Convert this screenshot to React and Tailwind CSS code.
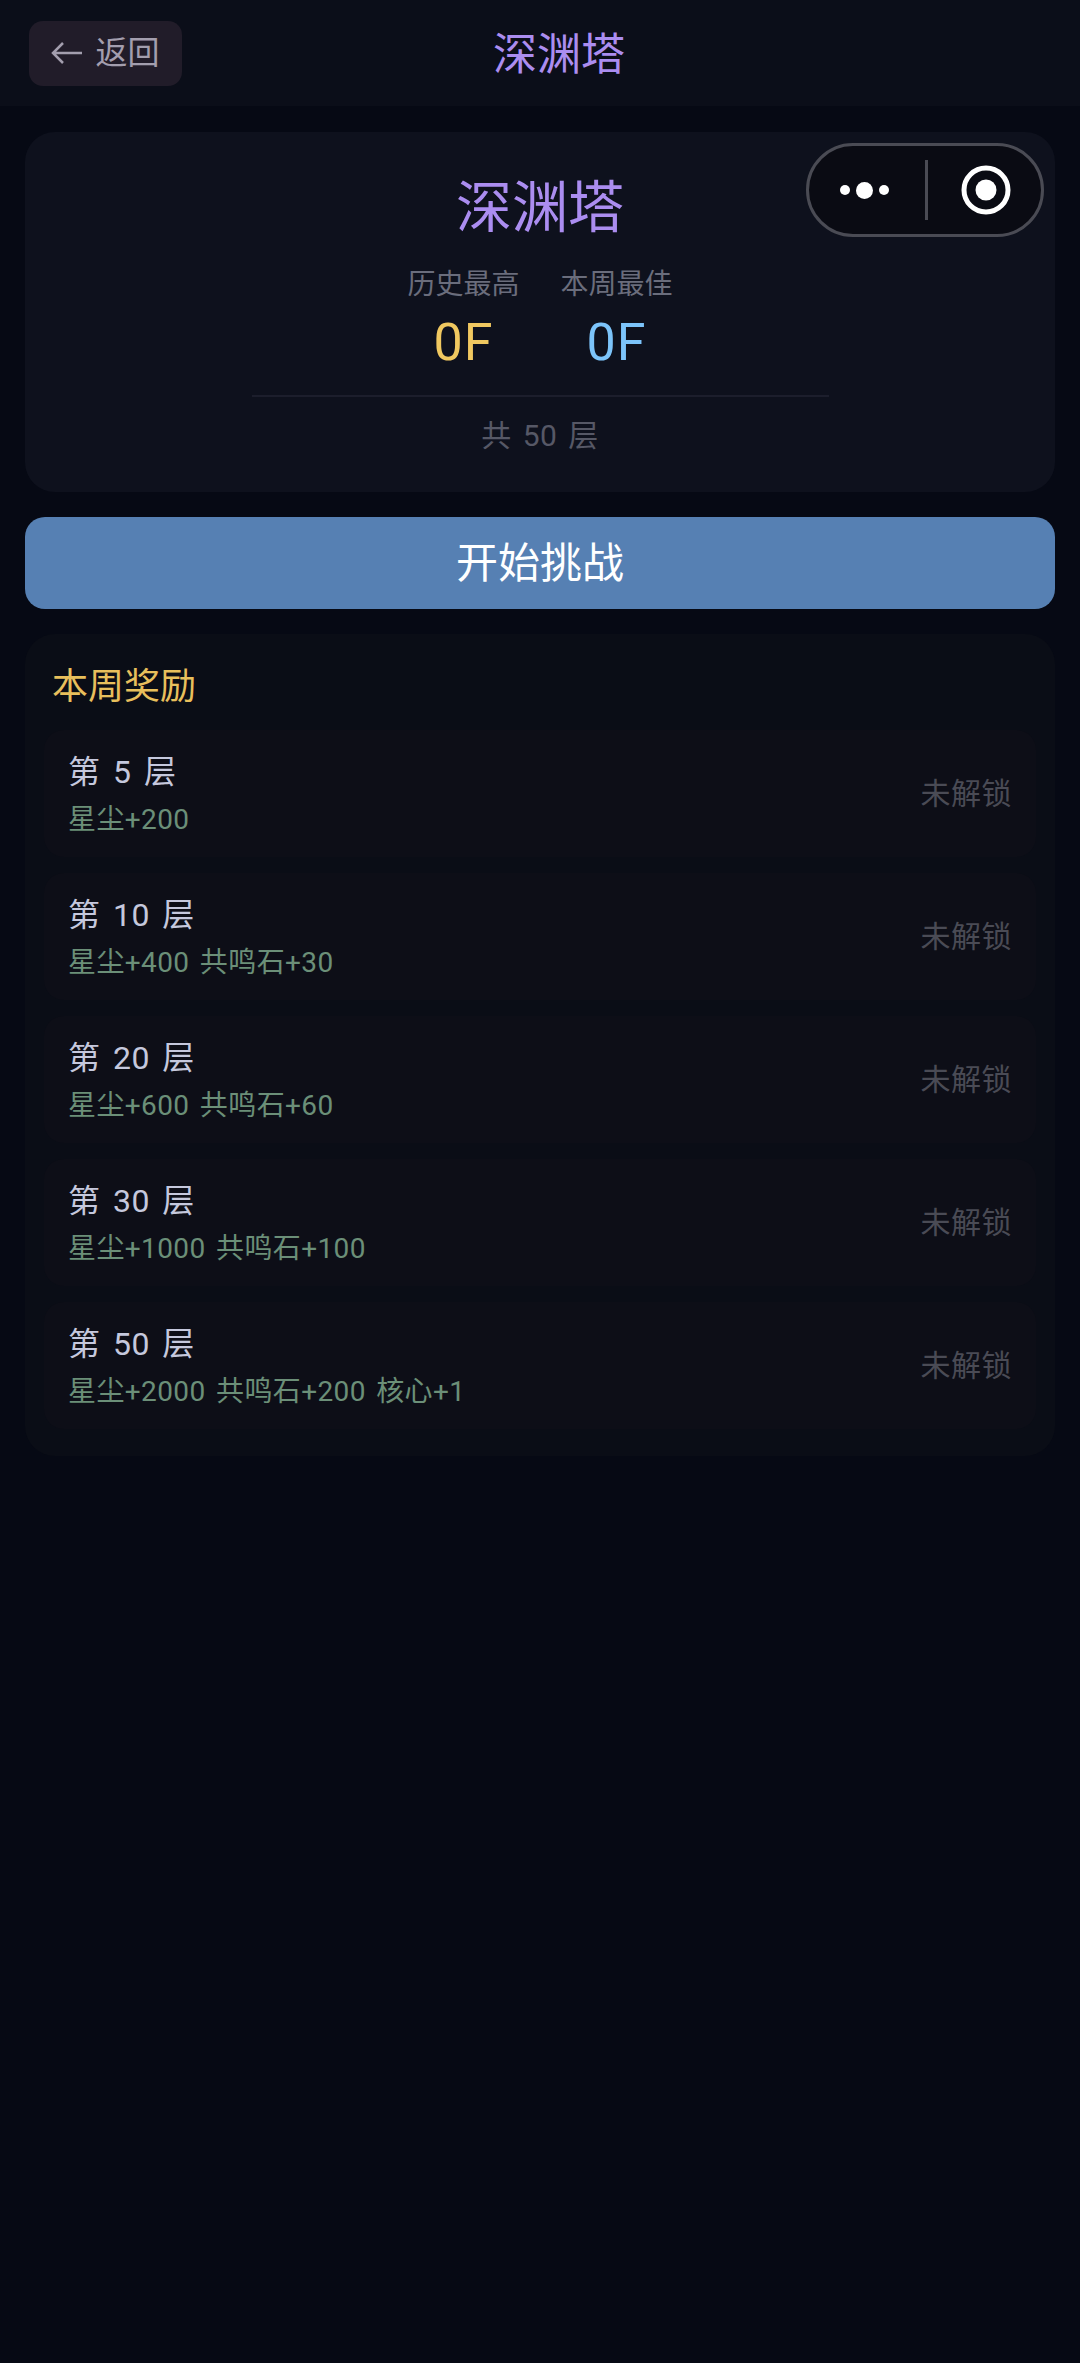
import React from 'react';

const rewards = [
  { floor: 5, text: '星尘+200' },
  { floor: 10, text: '星尘+400 共鸣石+30' },
  { floor: 20, text: '星尘+600 共鸣石+60' },
  { floor: 30, text: '星尘+1000 共鸣石+100' },
  { floor: 50, text: '星尘+2000 共鸣石+200 核心+1' },
];

const font = { fontFamily: 'Roboto, "Noto Sans CJK SC", sans-serif' };

function Capsule() {
  return (
    <div className="absolute left-[806px] top-[143px] flex h-[94px] w-[238px] items-center rounded-full border-[3px] border-[#4a4b54] bg-[#0a0b13]">
      <div className="flex w-[116px] items-center justify-center gap-[6px] pr-[6px]">
        <span className="h-[10px] w-[10px] rounded-full bg-white" />
        <span className="h-[17px] w-[17px] rounded-full bg-white" />
        <span className="h-[10px] w-[10px] rounded-full bg-white" />
      </div>
      <div className="h-[60px] w-[3px] bg-[#4a4b54]" />
      <div className="flex flex-1 items-center justify-center pl-[3px]">
        <svg width="50" height="50" viewBox="0 0 50 50">
          <circle cx="25" cy="25" r="22" fill="none" stroke="#fff" strokeWidth="5" />
          <circle cx="25" cy="25" r="10.5" fill="#fff" />
        </svg>
      </div>
    </div>
  );
}

function RewardRow({ floor, text }) {
  return (
    <div className="flex h-[127px] items-center justify-between rounded-[20px] bg-[#0d0e17] px-[24px]">
      <div>
        <p className="text-[32px] leading-[44px] tracking-[0.5px] [word-spacing:4px] text-[#c5c8dd]">第 {floor} 层</p>
        <p className="mt-[8px] text-[28px] leading-[36px] tracking-[0.4px] [word-spacing:3px] text-[#6b8f78]">{text}</p>
      </div>
      <span className="text-[30px] tracking-[0.5px] text-[#4a4b55]">未解锁</span>
    </div>
  );
}

export default function App() {
  return (
    <div className="relative min-h-[2363px] bg-[#060914]" style={font}>
      <header className="flex h-[106px] items-center bg-[#0b0e19] pl-[29px] pr-[144px]">
        <button className="flex h-[65px] w-[153px] items-center justify-center gap-[12px] rounded-[14px] bg-[#211c29] text-[32px] text-[#a39eae]">
          <svg width="32" height="24" viewBox="0 0 32 24" fill="none" stroke="#a39eae" strokeWidth="2.5">
            <path d="M31 12H2M12 2 2 12l10 10" />
          </svg>
          返回
        </button>
        <h1 className="flex-1 pt-[4px] text-center text-[44px] font-normal text-[#ab8df0]">深渊塔</h1>
      </header>

      <main className="flex flex-col gap-[25px] px-[25px] pt-[26px]">
        <section className="flex h-[360px] flex-col items-center rounded-[30px] bg-[#0e111d] pt-[38px]">
          <h2 className="text-[56px] leading-[76px] font-normal text-[#ab8df0]">深渊塔</h2>
          <div className="mt-[20px] flex gap-[43px]">
            <div className="flex w-[110px] flex-col items-center">
              <span className="text-[28px] leading-[38px] whitespace-nowrap text-[#6a6d7c]">历史最高</span>
              <span className="mt-[8px] text-[52px] leading-[62px] tracking-[1px] text-[#f0c860]">0F</span>
            </div>
            <div className="flex w-[110px] flex-col items-center">
              <span className="text-[28px] leading-[38px] whitespace-nowrap text-[#6a6d7c]">本周最佳</span>
              <span className="mt-[8px] text-[52px] leading-[62px] tracking-[1px] text-[#7cc4fa]">0F</span>
            </div>
          </div>
          <div className="mt-[21px] h-[2px] w-[577px] bg-[#1c1e2c]" />
          <p className="mt-[19px] text-[30px] leading-[40px] tracking-[0.5px] [word-spacing:3px] text-[#565866]">共 50 层</p>
        </section>

        <button className="h-[92px] rounded-[20px] bg-[#5680b3] text-[42px] text-white">开始挑战</button>

        <section className="rounded-[30px] bg-[#0a0d16] px-[19px] pt-[29px] pb-[27px]">
          <h3 className="pl-[8px] text-[36px] leading-[48px] font-normal text-[#e8bf5c]">本周奖励</h3>
          <div className="mt-[19px] flex flex-col gap-[16px]">
            {rewards.map(r => <RewardRow key={r.floor} {...r} />)}
          </div>
        </section>
      </main>

      <Capsule />
    </div>
  );
}
